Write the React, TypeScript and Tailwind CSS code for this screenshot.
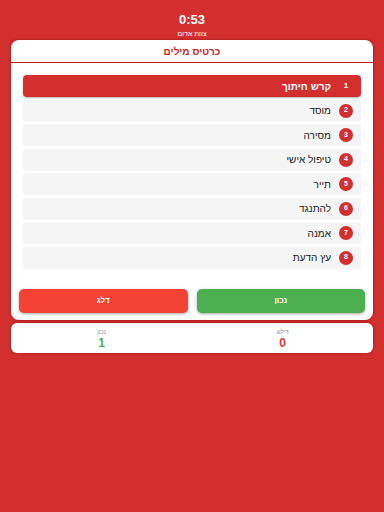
import React from 'react';

const words = ['קרש חיתוך', 'מוסד', 'מסירה', 'טיפול אישי', 'תייר', 'להתנגד', 'אמנה', 'עץ הדעת'];

export default function App() {
  return (
    <div
      dir="rtl"
      className="w-[384px] h-[512px] bg-[#d32f2f] flex flex-col"
      style={{ fontFamily: '"Liberation Sans", Arial, sans-serif' }}
    >
      <div className="pt-[13px] flex flex-col items-center text-white">
        <div className="text-[13px] font-bold leading-[14px]">0:53</div>
        <div className="text-[7px] leading-[9px] mt-[2px]">צוות אדום</div>
      </div>

      <div className="mx-[11px] mt-[2px] bg-white rounded-[8px] shadow-[0_0_3px_rgba(120,0,0,0.6)] flex flex-col">
        <div className="h-[23px] flex items-center justify-center border-b border-[#b71c1c] text-[10px] font-semibold text-[#c62828]">
          כרטיס מילים
        </div>

        <div className="px-[12px] pt-[12px] flex flex-col gap-[2.5px]">
          {words.map((w, i) =>
            i === 0 ? (
              <div
                key={i}
                className="h-[22px] rounded-[4px] bg-[#d32f2f] shadow-[0_1px_2px_rgba(0,0,0,0.3)] flex items-center pr-[11px] text-white text-[10px] font-bold"
              >
                <span className="w-[8px] text-center text-[8px]">1</span>
                <span className="mr-[11px]">{w}</span>
              </div>
            ) : (
              <div
                key={i}
                className="h-[22px] rounded-[3px] bg-[#f5f5f5] flex items-center pr-[8px] text-[10px] text-[#222]"
              >
                <span className="w-[14px] h-[14px] rounded-full bg-[#d32f2f] text-white text-[7px] font-bold flex items-center justify-center">
                  {i + 1}
                </span>
                <span className="mr-[8px]">{w}</span>
              </div>
            )
          )}
        </div>

        <div className="px-[8px] pt-[20px] pb-[7px] flex gap-[9px]">
          <button className="flex-1 h-[24px] rounded-[5px] bg-[#4caf50] text-white text-[8px] font-bold shadow-[0_1px_3px_rgba(0,0,0,0.35)]">
            נכון
          </button>
          <button className="flex-1 h-[24px] rounded-[5px] bg-[#f44336] text-white text-[8px] font-bold shadow-[0_1px_3px_rgba(0,0,0,0.35)]">
            דלג
          </button>
        </div>
      </div>

      <div className="mx-[11px] mt-[3px] h-[30px] bg-white rounded-[6px] shadow-[0_0_3px_rgba(120,0,0,0.6)] flex">
        <div className="flex-1 flex flex-col items-center pt-[5px]">
          <div className="text-[6px] leading-[8px] text-[#888]">דילוג</div>
          <div className="text-[12px] leading-[14px] font-bold text-[#e53935]">0</div>
        </div>
        <div className="flex-1 flex flex-col items-center pt-[5px]">
          <div className="text-[6px] leading-[8px] text-[#888]">נכון</div>
          <div className="text-[12px] leading-[14px] font-bold text-[#4caf50]">1</div>
        </div>
      </div>
    </div>
  );
}
